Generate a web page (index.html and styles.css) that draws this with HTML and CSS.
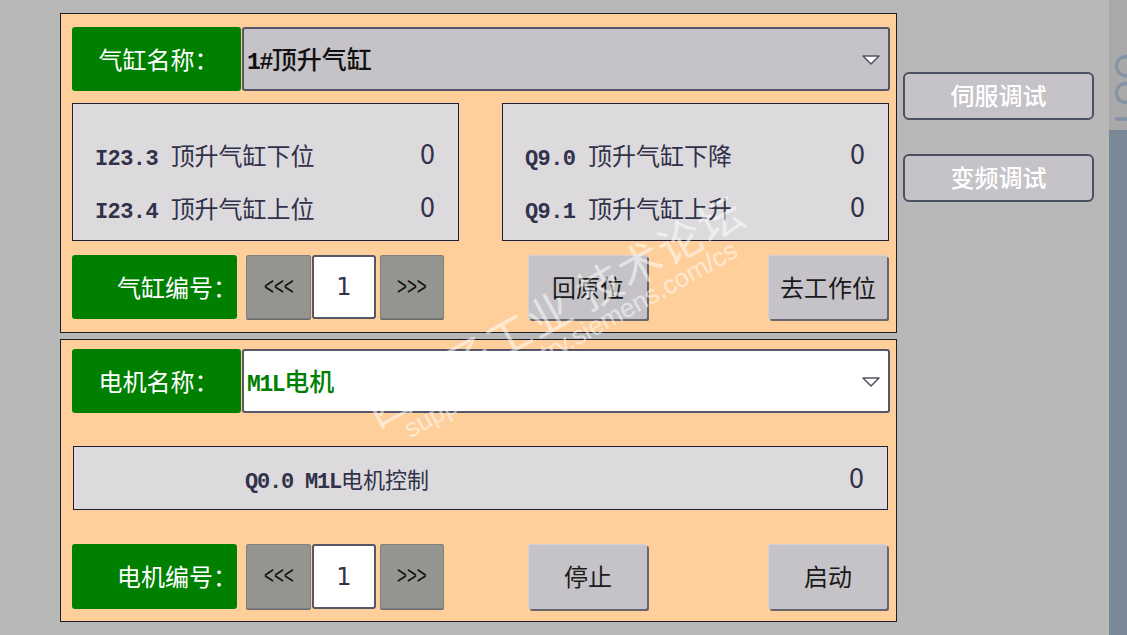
FILE: index.html
```html
<!DOCTYPE html>
<html lang="zh-CN">
<head>
<meta charset="utf-8">
<title>HMI</title>
<link rel="stylesheet" href="styles.css">
</head>
<body>
<div class="screen">
  <div class="main">
    <section class="panel p1">
      <div class="row head">
        <div class="tag">气缸名称：</div>
        <div class="select grey">
          <span class="sel-text"><span class="code">1#</span>顶升气缸</span>
          <svg class="arrow" width="18" height="10" viewBox="0 0 18 10"><polygon points="1,1 17,1 9,9" fill="#fff" stroke="#555566" stroke-width="1.6" stroke-linejoin="round"/></svg>
        </div>
      </div>
      <div class="info-row">
        <div class="info">
          <div class="irow"><span class="ilabel"><span class="code">I23.3 </span>顶升气缸下位</span><span class="ival">0</span></div>
          <div class="irow"><span class="ilabel"><span class="code">I23.4 </span>顶升气缸上位</span><span class="ival">0</span></div>
        </div>
        <div class="info">
          <div class="irow"><span class="ilabel"><span class="code">Q9.0 </span>顶升气缸下降</span><span class="ival">0</span></div>
          <div class="irow"><span class="ilabel"><span class="code">Q9.1 </span>顶升气缸上升</span><span class="ival">0</span></div>
        </div>
      </div>
      <div class="row ctrl c1">
        <div class="tag right">气缸编号：</div>
        <div class="stepper">
          <div class="step"><span class="chev">&lt;&lt;&lt;</span></div>
          <div class="num">1</div>
          <div class="step next"><span class="chev">&gt;&gt;&gt;</span></div>
        </div>
        <div class="btn b1">回原位</div>
        <div class="btn b2">去工作位</div>
      </div>
    </section>
    <section class="panel p2">
      <div class="row head">
        <div class="tag">电机名称：</div>
        <div class="select white">
          <span class="sel-text green"><span class="code">M1L</span>电机</span>
          <svg class="arrow" width="18" height="10" viewBox="0 0 18 10"><polygon points="1,1 17,1 9,9" fill="#fff" stroke="#555566" stroke-width="1.6" stroke-linejoin="round"/></svg>
        </div>
      </div>
      <div class="motor-info">
        <span class="ilabel narrow"><span class="code">Q0.0 M1L</span>电机控制</span><span class="ival">0</span>
      </div>
      <div class="row ctrl c2">
        <div class="tag right">电机编号：</div>
        <div class="stepper">
          <div class="step"><span class="chev">&lt;&lt;&lt;</span></div>
          <div class="num">1</div>
          <div class="step next"><span class="chev">&gt;&gt;&gt;</span></div>
        </div>
        <div class="btn b1">停止</div>
        <div class="btn b2">启动</div>
      </div>
    </section>
  </div>
  <aside class="side">
    <div class="sbtn">伺服调试</div>
    <div class="sbtn">变频调试</div>
  </aside>
  <div class="strip">
    <div class="strip-top"><span class="strip-text">LOO</span></div>
  </div>
  <div class="watermark">
    <div class="wm1">西门子工业 技术论坛</div>
    <div class="wm2">support.industry.siemens.com/cs</div>
  </div>
</div>
</body>
</html>
```
FILE: styles.css
```css
html, body {
  margin: 0;
  padding: 0;
}
body {
  background: #b8b8b8;
  font-family: "Noto Sans CJK SC", "Noto Sans", sans-serif;
}
.screen {
  position: relative;
  width: 1127px;
  height: 635px;
  display: flex;
  overflow: hidden;
  background: #b8b8b8;
}
.main {
  padding: 13px 0 0 60px;
  display: flex;
  flex-direction: column;
  gap: 6px;
}
.panel {
  width: 837px;
  box-sizing: border-box;
  border: 1px solid #1c1c2c;
  background: #ffcf9b;
  display: flex;
  flex-direction: column;
}
.p1 {
  height: 320px;
  padding: 13px 6px 0 11px;
}
.p2 {
  height: 283px;
  padding: 9px 6px 0 11px;
}
.row {
  display: flex;
  align-items: stretch;
}
.head {
  height: 64px;
}
.tag {
  width: 169px;
  flex: none;
  box-sizing: border-box;
  background: #008000;
  color: #fff;
  font-size: 24px;
  border-radius: 3px;
  display: flex;
  align-items: center;
  justify-content: center;
  padding-left: 4px;
  padding-bottom: 2px;
}
.tag.right {
  width: 165px;
  justify-content: flex-end;
  padding-left: 0;
  padding-right: 0;
}
.select {
  width: 648px;
  margin-left: 1px;
  box-sizing: border-box;
  border: 2px solid #55566a;
  border-radius: 3px;
  display: flex;
  align-items: center;
  padding: 0 8px 0 3px;
}
.grey { background: #c5c3c7; }
.white { background: #ffffff; }
.sel-text {
  font-size: 25px;
  color: #111;
  font-weight: 500;
  padding-bottom: 2px;
}
.sel-text.green { color: #008000; }
.code {
  font-family: "Liberation Mono", monospace;
  font-size: 23px;
  letter-spacing: -1.4px;
  font-weight: bold;
}
.arrow {
  margin-left: auto;
  margin-top: 2px;
}
.info-row {
  margin-top: 12px;
  width: 817px;
  display: flex;
  justify-content: space-between;
}
.info {
  width: 387px;
  height: 138px;
  box-sizing: border-box;
  border: 1px solid #1e1e3a;
  background: #dcdadd;
  padding: 35px 22px 0 22px;
  display: flex;
  flex-direction: column;
  gap: 23px;
}
.irow {
  height: 30px;
  display: flex;
  align-items: center;
  justify-content: space-between;
}
.ilabel {
  font-size: 24px;
  color: #30324a;
}
.ilabel .code {
  font-weight: bold;
  font-size: 22px;
  letter-spacing: -0.6px;
}
.ival {
  font-family: "DejaVu Sans", sans-serif;
  font-size: 27px;
  color: #30324a;
  transform: scaleX(0.9);
}
.ctrl {
  height: 64px;
}
.c1 { margin-top: 14px; }
.c2 { margin-top: 34px; height: 65px; }
.stepper {
  margin-left: 9px;
  display: flex;
}
.step {
  width: 65px;
  box-sizing: border-box;
  background: #949591;
  border: 1px solid #80817e;
  border-radius: 2px;
  box-shadow: 0 1px 0 #6a6b6e;
  display: flex;
  align-items: center;
  justify-content: center;
  color: #111;
}
.chev {
  display: inline-block;
  font-family: "Liberation Sans", sans-serif;
  font-size: 25px;
  letter-spacing: 0;
  transform: scaleX(0.68);
  padding-bottom: 2px;
}
.step.next {
  width: 64px;
  margin-left: 4px;
}
.num {
  width: 64px;
  margin-left: 1px;
  box-sizing: border-box;
  background: #fff;
  border: 2px solid #55566a;
  border-radius: 3px;
  display: flex;
  align-items: center;
  justify-content: center;
  font-family: "DejaVu Sans", sans-serif;
  font-size: 24px;
  color: #30324a;
}
.btn {
  width: 119px;
  box-sizing: border-box;
  background: #c5c3c7;
  border-top: 1px solid #d2d0d4;
  border-left: 1px solid #d2d0d4;
  border-radius: 2px;
  box-shadow: 2px 2px 0 #66666c;
  display: flex;
  align-items: center;
  justify-content: center;
  font-size: 24px;
  color: #1a1a1a;
  padding-bottom: 3px;
}
.b1 { margin-left: 84px; }
.b2 { margin-left: auto; margin-right: 3px; }
.motor-info {
  margin-top: 33px;
  margin-left: 1px;
  width: 815px;
  height: 64px;
  box-sizing: border-box;
  border: 1px solid #1e1e3a;
  background: #dcdadd;
  display: flex;
  align-items: center;
  justify-content: space-between;
  padding: 0 22px 0 171px;
}
.ilabel.narrow {
  font-size: 22px;
}
.ilabel.narrow .code {
  letter-spacing: -1.2px;
}
.side {
  margin-left: 6px;
  padding-top: 72px;
  width: 191px;
  display: flex;
  flex-direction: column;
  gap: 34px;
}
.sbtn {
  height: 48px;
  box-sizing: border-box;
  border: 2px solid #4a5163;
  border-radius: 6px;
  background: #c5c3c7;
  color: #fff;
  font-size: 24px;
  font-weight: 500;
  display: flex;
  align-items: center;
  justify-content: center;
  padding-bottom: 3px;
}
.strip {
  margin-left: auto;
  width: 18px;
  background: #7a8898;
  display: flex;
  flex-direction: column;
}
.strip-top {
  height: 130px;
  background: #a9a9a9;
  overflow: hidden;
  position: relative;
}
.strip-text {
  position: absolute;
  left: 2px;
  top: 0;
  writing-mode: vertical-rl;
  font-family: "DejaVu Sans", sans-serif;
  font-size: 34px;
  color: #8393a5;
  transform: rotate(180deg);
  line-height: 1;
  height: 124px;
}
.watermark {
  position: absolute;
  left: 560px;
  top: 320px;
  width: 480px;
  transform: translate(-50%, -50%) rotate(-29deg);
  text-align: center;
  color: rgba(255, 255, 255, 0.55);
  pointer-events: none;
  line-height: 1.0;
}
.wm1 {
  font-size: 44px;
  letter-spacing: 2px;
}
.wm2 {
  font-family: "Liberation Sans", sans-serif;
  font-size: 26px;
}
```
